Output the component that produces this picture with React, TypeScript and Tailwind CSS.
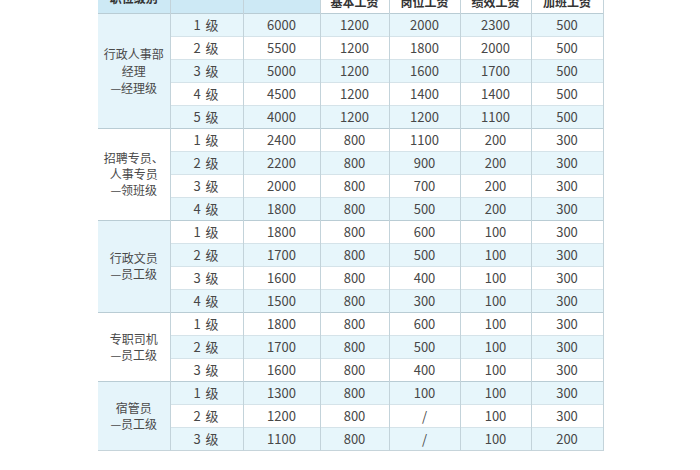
type Row = [string, string, string, string, string, string];
interface Group { title: string[]; blue: boolean; lead: string; rows: Row[]; }

const groups: Group[] = [
	{
		title: ["行政人事部", "经理", "—经理级"],
		blue: true,
		lead: "leading-[17px]",
		rows: [
			["1 级", "6000", "1200", "2000", "2300", "500"],
			["2 级", "5500", "1200", "1800", "2000", "500"],
			["3 级", "5000", "1200", "1600", "1700", "500"],
			["4 级", "4500", "1200", "1400", "1400", "500"],
			["5 级", "4000", "1200", "1200", "1100", "500"],
		],
	},
	{
		title: ["招聘专员、", "人事专员", "—领班级"],
		blue: false,
		lead: "leading-4",
		rows: [
			["1 级", "2400", "800", "1100", "200", "300"],
			["2 级", "2200", "800", "900", "200", "300"],
			["3 级", "2000", "800", "700", "200", "300"],
			["4 级", "1800", "800", "500", "200", "300"],
		],
	},
	{
		title: ["行政文员", "—员工级"],
		blue: true,
		lead: "leading-4",
		rows: [
			["1 级", "1800", "800", "600", "100", "300"],
			["2 级", "1700", "800", "500", "100", "300"],
			["3 级", "1600", "800", "400", "100", "300"],
			["4 级", "1500", "800", "300", "100", "300"],
		],
	},
	{
		title: ["专职司机", "—员工级"],
		blue: false,
		lead: "leading-4",
		rows: [
			["1 级", "1800", "800", "600", "100", "300"],
			["2 级", "1700", "800", "500", "100", "300"],
			["3 级", "1600", "800", "400", "100", "300"],
		],
	},
	{
		title: ["宿管员", "—员工级"],
		blue: true,
		lead: "leading-4",
		rows: [
			["1 级", "1300", "800", "100", "100", "300"],
			["2 级", "1200", "800", "/", "100", "300"],
			["3 级", "1100", "800", "/", "100", "200"],
		],
	},
];

const font = { fontFamily: '"Noto Sans CJK SC", "Noto Sans", sans-serif' };

export default function App() {
	let idx = 0;
	return (
		<div className="w-[700px] h-[470px] overflow-hidden bg-white" style={font}>
			<div className="-mt-[17px] pl-[98px]">
				<table className="w-[505px] table-fixed border-collapse text-[13px] text-[#474747]">
					<colgroup>
						<col className="w-[72px]" />
						<col className="w-[73px]" />
						<col className="w-[77px]" />
						<col className="w-[69px]" />
						<col className="w-[71px]" />
						<col className="w-[71px]" />
						<col className="w-[72px]" />
					</colgroup>
					<thead>
						<tr className="h-[30px]">
							<th className="bg-[#cde9f5] border-r border-[#c3d3da] align-middle font-bold text-[12px] text-[#333]">职位级别</th>
							<th className="bg-[#cde9f5] border-r border-[#c3d3da]"></th>
							<th className="bg-[#cde9f5] border-r border-[#c3d3da]"></th>
							{["基本工资", "岗位工资", "绩效工资", "加班工资"].map((h) => (
								<th key={h} className="bg-white border-r border-[#c3d3da] align-bottom pb-[3px] font-bold text-[12px] leading-4 text-[#333]">{h}</th>
							))}
						</tr>
					</thead>
					<tbody>
						{groups.map((g, gi) =>
							g.rows.map((r, ri) => {
								const blue = idx++ % 2 === 0;
								const rowBg = blue ? "bg-[#e7f6fb]" : "bg-white";
								const top = ri === 0 ? "border-t border-t-[#b9ccd4]" : "border-t border-t-[#d5e3e9]";
								return (
									<tr key={`${gi}-${ri}`} className={`h-[23px] ${top}`}>
										{ri === 0 && (
											<td
												rowSpan={g.rows.length}
												className={`${g.blue ? "bg-[#e5f4fa]" : "bg-white"} ${g.lead} border-r border-[#c3d3da] text-center align-middle text-[12px] text-[#4a4a4a]`}
											>
												{g.title.map((t) => (
													<div key={t}>{t}</div>
												))}
											</td>
										)}
										{r.map((c, ci) => (
											<td key={ci} className={`${rowBg} border-r border-[#c3d3da] text-center align-middle leading-none ${ci === 0 ? "tracking-[1px]" : ""}`}>{c}</td>
										))}
									</tr>
								);
							}),
						)}
						<tr className="border-t border-t-[#c6d4da]"><td colSpan={7} className="h-0 p-0"></td></tr>
					</tbody>
				</table>
			</div>
		</div>
	);
}
